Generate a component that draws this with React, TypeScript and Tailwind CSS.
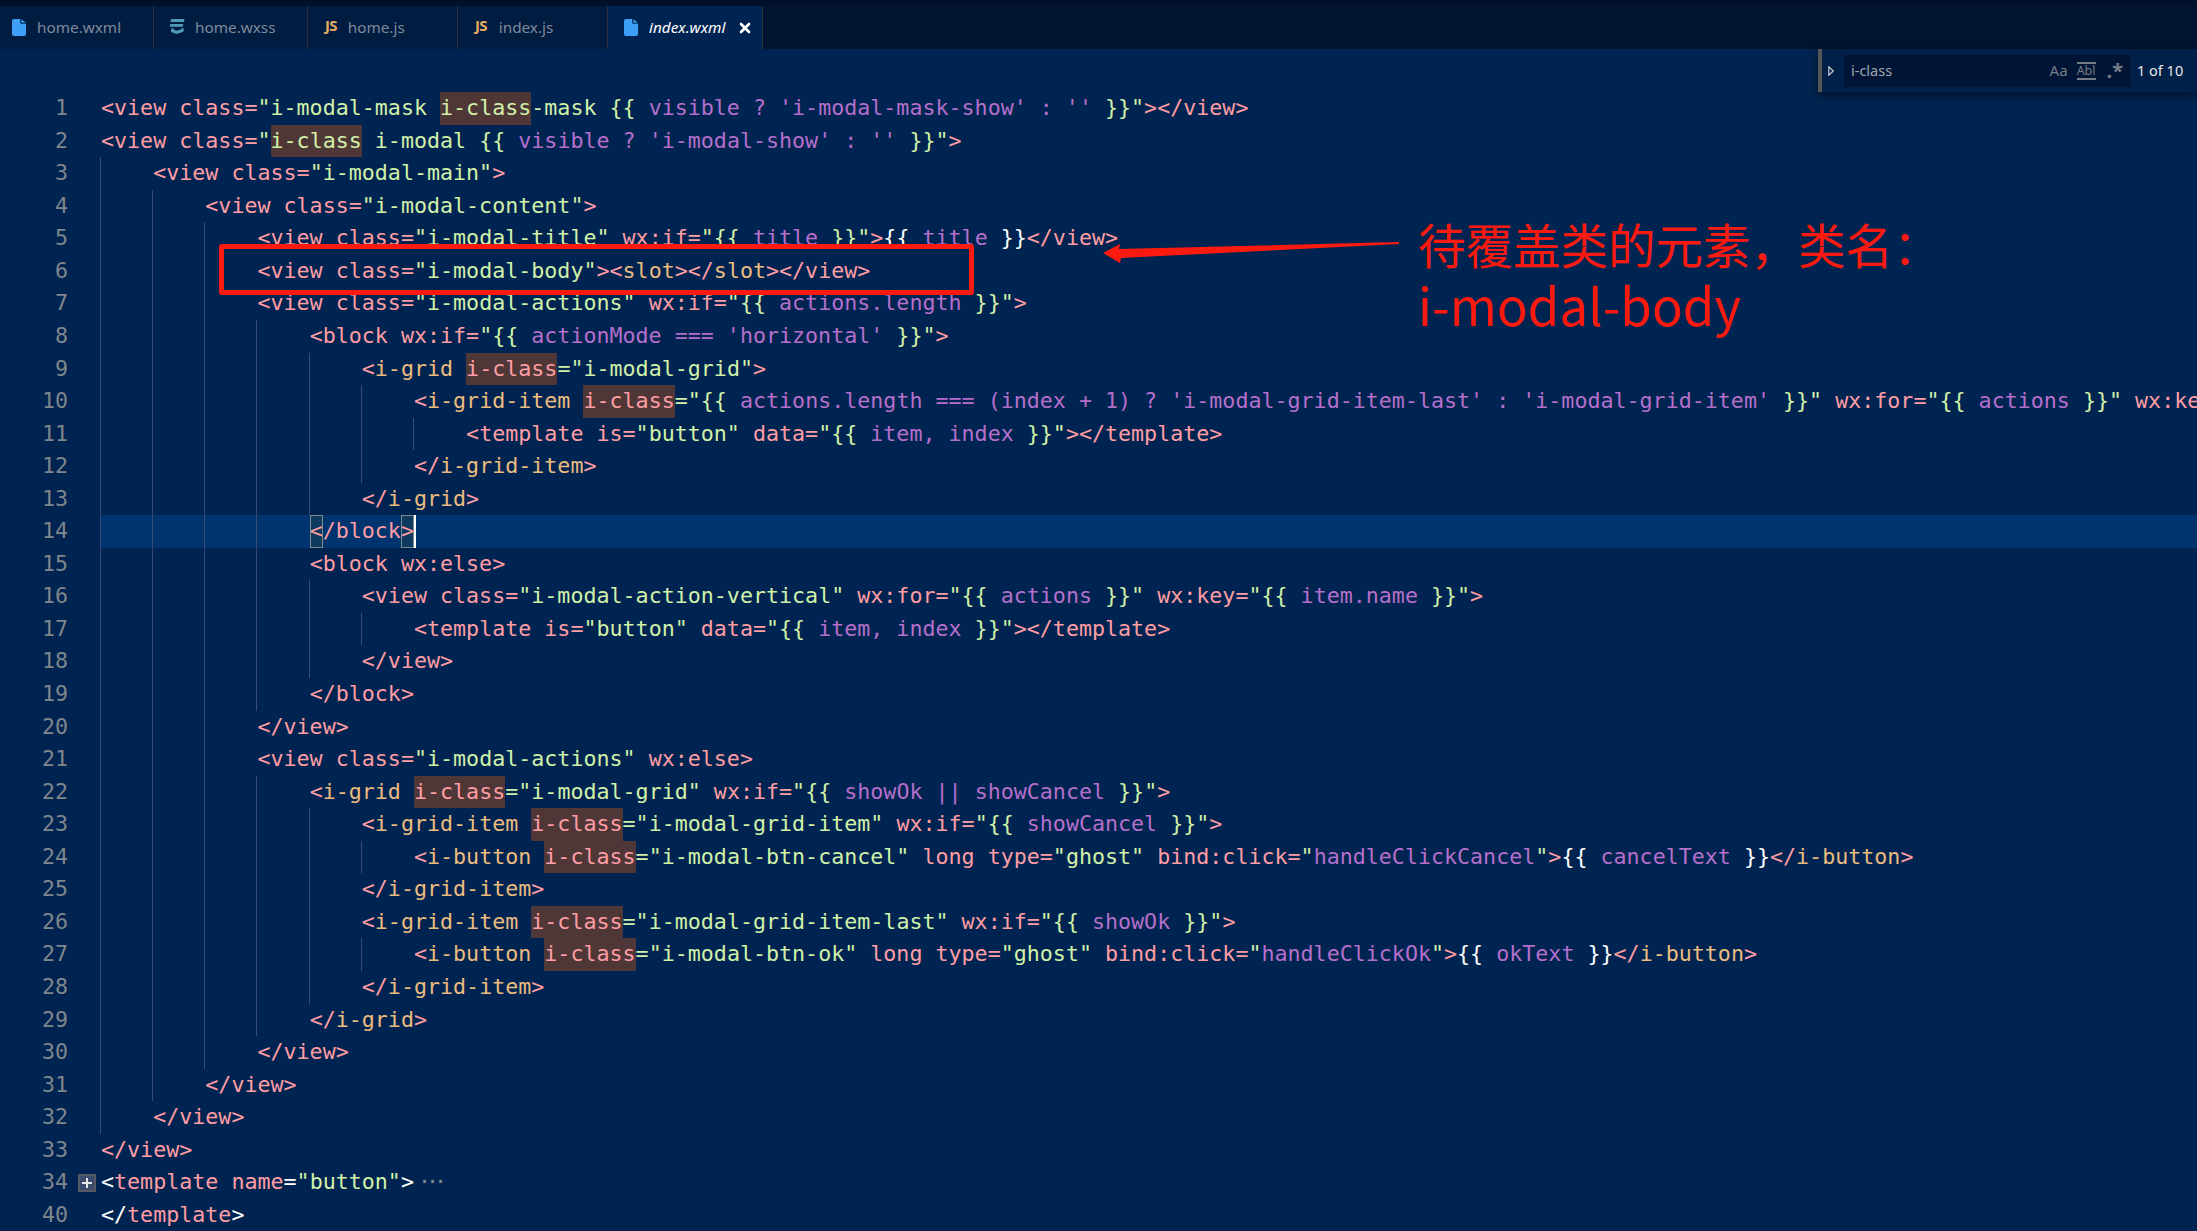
import React from 'react';
import { X } from 'lucide-react';

const COLORS: Record<string, string> = {
  p: 'text-[#ff9da4]',
  g: 'text-[#d1f1a9]',
  e: 'text-[#b56fcb]',
  o: 'text-[#ebbb7f]',
  w: 'text-white',
};

// ~x switches colour, ^ toggles the find match background
const LINES: { n: number; indent: number; code: string }[] = [
  { n: 1, indent: 0, code: `~p<view class=~g"i-modal-mask ^i-class^-mask {{ ~evisible ? 'i-modal-mask-show' : '' ~g}}"~p></view>` },
  { n: 2, indent: 0, code: `~p<view class=~g"^i-class^ i-modal {{ ~evisible ? 'i-modal-show' : '' ~g}}"~p>` },
  { n: 3, indent: 1, code: `~p<view class=~g"i-modal-main"~p>` },
  { n: 4, indent: 2, code: `~p<view class=~g"i-modal-content"~p>` },
  { n: 5, indent: 3, code: `~p<view class=~g"i-modal-title" ~pwx:if=~g"{{ ~etitle ~g}}"~p>~w{{ ~etitle ~w}}~p</view>` },
  { n: 6, indent: 3, code: `~p<view class=~g"i-modal-body"~p><~oslot~p></~oslot~p></view>` },
  { n: 7, indent: 3, code: `~p<view class=~g"i-modal-actions" ~pwx:if=~g"{{ ~eactions.length ~g}}"~p>` },
  { n: 8, indent: 4, code: `~p<block wx:if=~g"{{ ~eactionMode === 'horizontal' ~g}}"~p>` },
  { n: 9, indent: 5, code: `~p<~oi-grid ~p^i-class^~g="i-modal-grid"~p>` },
  { n: 10, indent: 6, code: `~p<~oi-grid-item ~p^i-class^~g="{{ ~eactions.length === (index + 1) ? 'i-modal-grid-item-last' : 'i-modal-grid-item' ~g}}" ~pwx:for=~g"{{ ~eactions ~g}}" ~pwx:key=~g"{{ ~eitem.name ~g}}"~p>` },
  { n: 11, indent: 7, code: `~p<template is=~g"button" ~pdata=~g"{{ ~eitem, index ~g}}"~p></template>` },
  { n: 12, indent: 6, code: `~p</~oi-grid-item~p>` },
  { n: 13, indent: 5, code: `~p</~oi-grid~p>` },
  { n: 14, indent: 4, code: `~b<~p/block~b>` },
  { n: 15, indent: 4, code: `~p<block wx:else>` },
  { n: 16, indent: 5, code: `~p<view class=~g"i-modal-action-vertical" ~pwx:for=~g"{{ ~eactions ~g}}" ~pwx:key=~g"{{ ~eitem.name ~g}}"~p>` },
  { n: 17, indent: 6, code: `~p<template is=~g"button" ~pdata=~g"{{ ~eitem, index ~g}}"~p></template>` },
  { n: 18, indent: 5, code: `~p</view>` },
  { n: 19, indent: 4, code: `~p</block>` },
  { n: 20, indent: 3, code: `~p</view>` },
  { n: 21, indent: 3, code: `~p<view class=~g"i-modal-actions" ~pwx:else>` },
  { n: 22, indent: 4, code: `~p<~oi-grid ~p^i-class^~g="i-modal-grid" ~pwx:if=~g"{{ ~eshowOk || showCancel ~g}}"~p>` },
  { n: 23, indent: 5, code: `~p<~oi-grid-item ~p^i-class^~g="i-modal-grid-item" ~pwx:if=~g"{{ ~eshowCancel ~g}}"~p>` },
  { n: 24, indent: 6, code: `~p<~oi-button ~p^i-class^~g="i-modal-btn-cancel" ~plong type=~g"ghost" ~pbind:click=~g"~ehandleClickCancel~g"~p>~w{{ ~ecancelText ~w}}~p</~oi-button~p>` },
  { n: 25, indent: 5, code: `~p</~oi-grid-item~p>` },
  { n: 26, indent: 5, code: `~p<~oi-grid-item ~p^i-class^~g="i-modal-grid-item-last" ~pwx:if=~g"{{ ~eshowOk ~g}}"~p>` },
  { n: 27, indent: 6, code: `~p<~oi-button ~p^i-class^~g="i-modal-btn-ok" ~plong type=~g"ghost" ~pbind:click=~g"~ehandleClickOk~g"~p>~w{{ ~eokText ~w}}~p</~oi-button~p>` },
  { n: 28, indent: 5, code: `~p</~oi-grid-item~p>` },
  { n: 29, indent: 4, code: `~p</~oi-grid~p>` },
  { n: 30, indent: 3, code: `~p</view>` },
  { n: 31, indent: 2, code: `~p</view>` },
  { n: 32, indent: 1, code: `~p</view>` },
  { n: 33, indent: 0, code: `~p</view>` },
  { n: 34, indent: 0, code: `~w<~ptemplate name~w=~g"button"~w>` },
  { n: 40, indent: 0, code: `~w</~ptemplate~w>` },
];

function parseCode(code: string) {
  const parts: { text: string; color: string; match: boolean }[] = [];
  let color = 'p';
  let match = false;
  let text = '';
  const flush = () => {
    if (text) parts.push({ text, color, match });
    text = '';
  };
  for (let i = 0; i < code.length; i++) {
    if (code[i] === '~') {
      flush();
      color = code[++i];
    } else if (code[i] === '^') {
      flush();
      match = !match;
    } else {
      text += code[i];
    }
  }
  flush();
  return parts;
}

const FileIcon = () => (
  <svg viewBox="0 0 14 17" className="w-[14px] h-[17px] shrink-0">
    <path d="M2 0h6.2v3.2c0 1 .7 1.6 1.6 1.6H14V15a2 2 0 0 1-2 2H2a2 2 0 0 1-2-2V2a2 2 0 0 1 2-2z" fill="#3d9ff5" />
    <path d="M9.4 0.3 13.8 3.7H10.2a.8.8 0 0 1-.8-.8z" fill="#3d9ff5" />
  </svg>
);

const CssIcon = () => (
  <svg viewBox="0 0 16 16" className="w-4 h-4 shrink-0 mb-1">
    <path d="M2 1h13.5l-.6 3H1.5z M1.3 6h13l-.5 2.8H.8z" fill="#519aba" />
    <path d="M2.2 10.5h2.9l-.2 1.3 3 1 4-1.2.3-1.1h2.8l-.8 3.3-6.4 2.2-5.8-2z" fill="#519aba" />
  </svg>
);

const JsIcon = () => (
  <span className="font-bold text-[15px] leading-none text-[#e5ac62] mb-1 tracking-tighter">JS</span>
);

const TABS = [
  { name: 'home.wxml', icon: <FileIcon />, width: 'w-[154px]', pad: 'pl-[12px] gap-[11px]' },
  { name: 'home.wxss', icon: <CssIcon />, width: 'w-[154px]', pad: 'pl-[15px] gap-[10px]' },
  { name: 'home.js', icon: <JsIcon />, width: 'w-[150px]', pad: 'pl-[17px] gap-[11px]' },
  { name: 'index.js', icon: <JsIcon />, width: 'w-[150px]', pad: 'pl-[17px] gap-[12px]' },
];

function CodeLine({ n, indent, code }: { n: number; indent: number; code: string }) {
  const active = n === 14;
  return (
    <div className="flex h-[32.55px] leading-[32.55px]">
      <div className="w-[100px] shrink-0 flex items-center">
        <span className="w-[68px] text-right text-[#7f868c]">{n}</span>
        {n === 34 && (
          <span className="ml-[10px] w-[18px] h-[18px] flex items-center justify-center bg-[#3b4b6b] border-2 border-[#555a62]">
            <svg viewBox="0 0 10 10" className="w-[10px] h-[10px]">
              <path d="M5 0v10M0 5h10" stroke="#e4e6ea" strokeWidth="2" />
            </svg>
          </span>
        )}
      </div>
      <div className={`flex-1 min-w-0 flex overflow-hidden whitespace-pre ${active ? 'bg-[#00346e]' : ''}`}>
        {Array.from({ length: indent }).map((_, i) => (
          <div key={i} className="w-[52.16px] shrink-0 border-l border-[#3a4a78]" />
        ))}
        <div className="pl-[1px]">
          {parseCode(code).map((part, i) =>
            part.color === 'b' ? (
              <span key={i} className="inline-block h-[32.55px] align-top bg-[#0d3a5e] outline outline-1 -outline-offset-1 outline-[#7f8c8c] text-[#ff9da4]">
                {part.text}
              </span>
            ) : (
              <span
                key={i}
                className={`${COLORS[part.color]} ${part.match ? 'inline-block h-[33px] align-top bg-[#503737]' : ''}`}
              >
                {part.text}
              </span>
            )
          )}
          {active && <span className="inline-block w-[2px] h-[33px] align-top bg-white" />}
          {n === 34 && <span className="text-[#7f868c] ml-[4px] tracking-[-5px]">···</span>}
        </div>
      </div>
    </div>
  );
}

export default function App() {
  return (
    <div className="relative w-screen h-screen overflow-hidden bg-[#002451]">
      <div className="h-[6px] bg-[#00102a]" />
      <div className="flex h-[43px] bg-[#00142f] text-[15.3px] font-['Noto_Sans',sans-serif]">
        {TABS.map((tab) => (
          <div
            key={tab.name}
            className={`${tab.width} ${tab.pad} flex items-center bg-[#001c40] border-r border-[#2c2f36] text-[#7e8a9c]`}
          >
            {tab.icon}
            <span>{tab.name}</span>
          </div>
        ))}
        <div className="w-[155px] pl-[16px] gap-[11px] flex items-center bg-[#002451] border-r border-[#2c2f36] text-white">
          <FileIcon />
          <span className="italic">index.wxml</span>
          <X size={16} strokeWidth={4} className="ml-[1px] text-white" />
        </div>
      </div>

      <div className="pt-[43.2px] font-['DejaVu_Sans_Mono',monospace] text-[21.66px]">
        {LINES.map((line) => (
          <CodeLine key={line.n} {...line} />
        ))}
      </div>

      {/* find widget */}
      <div className="absolute top-[49px] left-[1818px] right-0 h-[43px] flex items-center bg-[#00204a] border-l-4 border-[#555555] shadow-[0_3px_8px_rgba(0,0,0,0.55)] font-['Noto_Sans',sans-serif] text-[14.5px]">
        <svg viewBox="0 0 6 10" className="w-[6px] h-[10px] ml-[6px] mr-[10px]">
          <path d="M.8.8 5.2 5 .8 9.2z" fill="none" stroke="#b9bec6" strokeWidth="1.3" />
        </svg>
        <div className="w-[286px] h-[32px] flex items-center bg-[#001535] text-[#a0a6b0] pl-[7px]">
          <span>i-class</span>
          <span className="ml-auto text-[#767c86] text-[15px]">Aa</span>
          <span className="ml-[9px] text-[#767c86] text-[12.5px] leading-[14px] border-t-2 border-b-2 border-[#767c86]">Abl</span>
          <span className="ml-[11px] mr-[7px] text-[#767c86] font-bold text-[20px] leading-none">.*</span>
        </div>
        <span className="ml-[7px] text-[#e6e6e6]">1 of 10</span>
      </div>

      {/* red annotation on top of the editor */}
      <div className="absolute left-[219px] top-[244px] w-[755px] h-[51px] border-[5px] border-[#fb1a10] rounded-[3px]" />
      <svg className="absolute left-[1100px] top-[238px] w-[300px] h-[28px]" viewBox="0 0 300 28">
        <path d="M3 15 20 6 19 11 299 4 299 6 21 20 20 25z" fill="#fb1a10" />
      </svg>
      <div className="absolute left-[1418px] top-[213px] text-[#fb1a10] font-['Noto_Sans_CJK_SC','Noto_Sans',sans-serif]">
        <div className="text-[47.5px] leading-[62px]">待覆盖类的元素，类名：</div>
        <div className="text-[51px] leading-[59px]">i-modal-body</div>
      </div>
    </div>
  );
}
